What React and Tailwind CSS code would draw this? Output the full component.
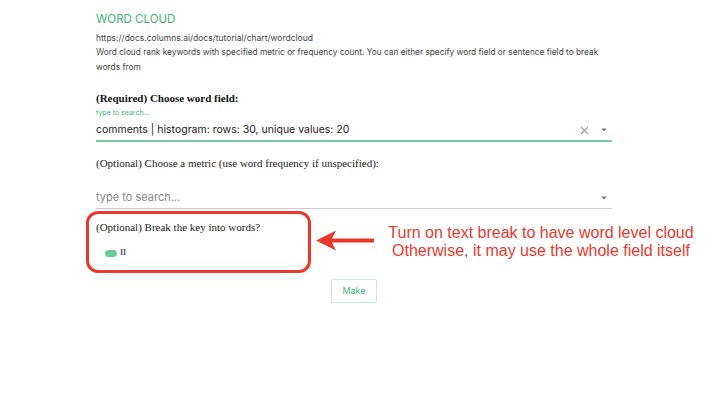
import React from "react";

const SANS = { fontFamily: "Inter, 'Liberation Sans', sans-serif" };
const SERIF = { fontFamily: "'Liberation Serif', 'DejaVu Serif', serif" };

function Caret() {
  return (
    <svg width="8" height="8" viewBox="0 0 8 8" className="shrink-0">
      <path d="M1.5 2.5 L6.5 2.5 L4 5.5 Z" fill="#6b6b6b" />
    </svg>
  );
}

function Clear() {
  return (
    <svg width="9" height="9" viewBox="0 0 9 9" className="shrink-0">
      <path d="M1 1 L8 8 M8 1 L1 8" stroke="#9a9a9a" strokeWidth="1.1" />
    </svg>
  );
}

export default function App() {
  return (
    <div className="relative w-[720px] h-[410px] bg-white overflow-hidden" style={SANS}>
      <div className="ml-[96px] w-[516px] pt-[11px] flex flex-col">
        <h2 className="text-[11.5px] leading-[16px] text-[#43b37a]">WORD CLOUD</h2>
        <p className="mt-[4px] text-[8.5px] leading-[14px] text-[#444]">https://docs.columns.ai/docs/tutorial/chart/wordcloud</p>
        <p className="text-[8.3px] leading-[15px] text-[#444]">
          Word cloud rank keywords with specified metric or frequency count. You can either specify word field or sentence field to break words from
        </p>

        <div className="mt-[16px] text-[11px] leading-[14px] font-bold text-[#111]" style={SERIF}>
          (Required) Choose word field:
        </div>
        <div className="mt-[3px] text-[7px] leading-[10px] text-[#43b37a]">type to search...</div>
        <div className="mt-[2px] flex items-center h-[22px] border-b-2 border-[#7cc7a1]">
          <span className="flex-1 text-[10.5px] text-[#222]">comments | histogram: rows: 30, unique values: 20</span>
          <span className="mr-[11px]"><Clear /></span>
          <span className="mr-[4px]"><Caret /></span>
        </div>

        <div className="mt-[14px] text-[11px] leading-[14px] text-[#222]" style={SERIF}>
          (Optional) Choose a metric (use word frequency if unspecified):
        </div>
        <div className="mt-[17px] flex items-center h-[22px] border-b border-[#cfcfcf]">
          <span className="flex-1 text-[11px] text-[#888]">type to search...</span>
          <span className="mr-[4px]"><Caret /></span>
        </div>

        <div className="mt-[11px] text-[11px] leading-[14px] text-[#222]" style={SERIF}>
          (Optional) Break the key into words?
        </div>
        <div className="mt-[15px] ml-[9px] flex items-center gap-[3px]">
          <span className="w-[12px] h-[7px] rounded-full bg-[#6cc79a]" />
          <span className="text-[8px] leading-none font-bold text-[#555]" style={SERIF}>II</span>
        </div>

        <div className="mt-[22px] flex justify-center">
          <button className="w-[46px] h-[24px] border border-[#c9ead8] rounded-[2px] text-[9px] text-[#43b37a]">Make</button>
        </div>
      </div>

      {/* red annotation */}
      <div className="absolute left-[86px] top-[211px] w-[225px] h-[62px] border-[3px] border-[#e8392f] rounded-[12px]" />
      <svg className="absolute left-[314px] top-[229px]" width="64" height="24" viewBox="0 0 64 24">
        <path d="M2 11.5 L22 1.5 L18 9.5 L60 9.5 L60 13.5 L18 13.5 L22 21.5 Z" fill="#e8392f" />
      </svg>
      <div className="absolute left-[384px] top-[224px] w-[314px] text-[16px] leading-[18px] text-[#e8392f] text-center" style={{ fontFamily: "'Liberation Sans', Arial, sans-serif" }}>
        <div>Turn on text break to have word level cloud</div>
        <div>Otherwise, it may use the whole field itself</div>
      </div>
    </div>
  );
}
